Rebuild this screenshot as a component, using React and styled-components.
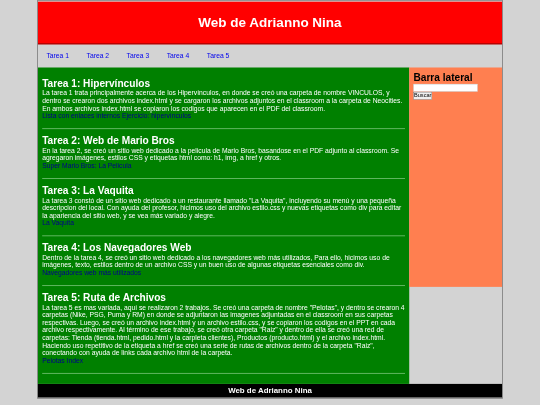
import React from 'react';
import styled, { createGlobalStyle } from 'styled-components';

// the page is written at 1280x960 and shrunk to fit the 540px window
const GlobalStyle = createGlobalStyle`
  html, body {
    margin: 0;
    padding: 0;
    background-color: #d3d3d3;
    font-family: "Liberation Sans", Arial, sans-serif;
  }
`;

const Frame = styled.div`
  width: 540px;
  height: 405px;
  overflow: hidden;
`;

const Stage = styled.div`
  width: 1280px;
  height: 960px;
  transform: scale(0.421875);
  transform-origin: 0 0;
`;

const Wrapper = styled.div`
  width: 1104px;
  box-sizing: border-box;
  margin: 0 auto;
  padding-top: 2px;
  border: 2px solid #808080;
  border-bottom-width: 3px;
  background-color: #d3d3d3;
  filter: blur(0.7px);
`;

const Header = styled.header`
  height: 101px;
  box-sizing: border-box;
  display: flex;
  justify-content: center;
  align-items: center;
  background-color: #ff0000;
  border-bottom: 2px solid #800000;
`;

const Title = styled.h1`
  margin: 0;
  font-size: 32px;
  font-weight: 700;
  color: #fff;
`;

const Nav = styled.nav`
  height: 55px;
  display: flex;
  align-items: center;
  gap: 41.7px;
  padding-left: 20px;
`;

const NavLink = styled.a`
  font-size: 16px;
  color: #0000ee;
  text-decoration: none;
`;

const Body = styled.div`
  display: flex;
  height: 750px;
`;

const Main = styled.main`
  width: 880px;
  box-sizing: border-box;
  padding: 24px 10px 0 10px;
  background-color: #008000;
  color: #fff;
`;

const Section = styled.section`
  padding-bottom: 20px;
  margin-bottom: 14px;
  border-bottom: 2px solid #70c070;
`;

const SectionTitle = styled.h2`
  margin: 0;
  font-size: 24px;
  line-height: 28px;
  font-weight: 700;
  color: #fff;
`;

const Text = styled.p`
  margin: 0;
  font-size: 16px;
  line-height: 18px;
`;

const TaskLink = styled.a`
  display: block;
  font-size: 16px;
  line-height: 18px;
  color: #00008b;
  text-decoration: none;
`;

const Aside = styled.aside`
  flex: 1;
`;

const SidePanel = styled.div`
  height: 520px;
  box-sizing: border-box;
  padding: 8px 10px 0 10px;
  background-color: #ff7f50;
`;

const SideTitle = styled.h3`
  margin: 0 0 1px 0;
  font-size: 24px;
  line-height: 30px;
  font-weight: 700;
  color: #000;
`;

const SearchInput = styled.input`
  display: block;
  width: 152px;
  height: 18px;
  box-sizing: border-box;
  padding: 0;
  border: 1px solid #c0c0c0;
  background-color: #fff;
`;

const SearchButton = styled.button`
  display: block;
  width: 44px;
  height: 18px;
  box-sizing: border-box;
  padding: 0;
  margin-top: 1px;
  font-family: inherit;
  font-size: 13.33px;
  line-height: 16px;
  color: #000;
  background-color: #efefef;
  border: 1px solid #767676;
`;

const Footer = styled.footer`
  height: 32px;
  display: flex;
  justify-content: center;
  align-items: center;
  background-color: #000;
  color: #fff;
  font-size: 18.72px;
  font-weight: 700;
`;

const tasks = [
  {
    title: 'Tarea 1: Hipervínculos',
    text: 'La tarea 1 trata principalmente acerca de los Hipervínculos, en donde se creó una carpeta de nombre VINCULOS, y dentro se crearon dos archivos index.html y se cargaron los archivos adjuntos en el classroom a la carpeta de Neocities. En ambos archivos index.html se copiaron los codigos que aparecen en el PDF del classroom.',
    link: 'Lista con enlaces internos Ejercicio: hipervínculos',
  },
  {
    title: 'Tarea 2: Web de Mario Bros',
    text: 'En la tarea 2, se creó un sitio web dedicado a la pelicula de Mario Bros, basandose en el PDF adjunto al classroom. Se agregaron imágenes, estilos CSS y etiquetas html como: h1, img, a href y otros.',
    link: 'Super Mario Bros: La Pelicula',
  },
  {
    title: 'Tarea 3: La Vaquita',
    text: 'La tarea 3 constó de un sitio web dedicado a un restaurante llamado "La Vaquita", incluyendo su menú y una pequeña descripcion del local. Con ayuda del profesor, hicimos uso del archivo estilo.css y nuevas etiquetas como div para editar la apariencia del sitio web, y se vea más variado y alegre.',
    link: 'La Vaquita',
  },
  {
    title: 'Tarea 4: Los Navegadores Web',
    text: 'Dentro de la tarea 4, se creó un sitio web dedicado a los navegadores web más utilizados, Para ello, hicimos uso de imágenes, texto, estilos dentro de un archivo CSS y un buen uso de algunas etiquetas esenciales como div.',
    link: 'Navegadores web más utilizados',
  },
  {
    title: 'Tarea 5: Ruta de Archivos',
    text: 'La tarea 5 es mas variada, aquí se realizaron 2 trabajos. Se creó una carpeta de nombre "Pelotas", y dentro se crearon 4 carpetas (Nike, PSG, Puma y RM) en donde se adjuntaron las imagenes adjuntadas en el classroom en sus carpetas respectivas. Luego, se creó un archivo index.html y un archivo estilo.css, y se copiaron los codigos en el PPT en cada archivo respectivamente. Al término de ese trabajo, se creó otra carpeta "Raiz" y dentro de ella se creó una red de carpetas: Tienda (tienda.html, pedido.html y la carpleta clientes), Productos (producto.html) y el archivo index.html. Haciendo uso repetitivo de la etiqueta a href se creó una serie de rutas de archivos dentro de la carpeta "Raiz", conectando con ayuda de links cada archivo html de la carpeta.',
    link: 'Pelotas Index',
  },
];

const App = () => {
  return (
    <>
      <GlobalStyle />
      <Frame>
        <Stage>
          <Wrapper>
            <Header>
              <Title>Web de Adrianno Nina</Title>
            </Header>
            <Nav>
              {['Tarea 1', 'Tarea 2', 'Tarea 3', 'Tarea 4', 'Tarea 5'].map((name) => (
                <NavLink href="#" key={name}>{name}</NavLink>
              ))}
            </Nav>
            <Body>
              <Main>
                {tasks.map((task) => (
                  <Section key={task.title}>
                    <SectionTitle>{task.title}</SectionTitle>
                    <Text>{task.text}</Text>
                    <TaskLink href="#">{task.link}</TaskLink>
                  </Section>
                ))}
              </Main>
              <Aside>
                <SidePanel>
                  <SideTitle>Barra lateral</SideTitle>
                  <SearchInput type="text" />
                  <SearchButton>Buscar</SearchButton>
                </SidePanel>
              </Aside>
            </Body>
            <Footer>Web de Adrianno Nina</Footer>
          </Wrapper>
        </Stage>
      </Frame>
    </>
  );
};

export default App;
